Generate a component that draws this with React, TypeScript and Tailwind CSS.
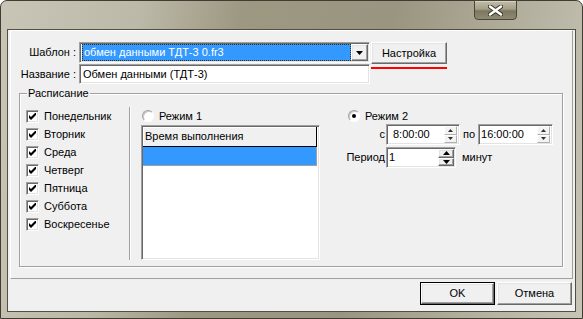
import React from 'react';

const sunken =
  'border border-t-[#a0a0a0] border-l-[#a0a0a0] border-b-white border-r-white shadow-[inset_1px_1px_0_#696969,inset_-1px_-1px_0_#e3e3e3]';
const raised =
  'border border-t-white border-l-white border-b-[#696969] border-r-[#696969] shadow-[inset_-1px_-1px_0_#a0a0a0,inset_1px_1px_0_#e3e3e3] bg-[#f0f0f0]';

const days = ['Понедельник', 'Вторник', 'Среда', 'Четверг', 'Пятница', 'Суббота', 'Воскресенье'];

const CheckBox = ({ label }: { label: string }) => (
  <div className="flex items-center h-[13px]">
    <span className={`w-[13px] h-[13px] bg-white flex items-center justify-center ${sunken}`}>
      <svg width="7" height="7" viewBox="0 0 7 7">
        <path d="M0 2 L2 4 L7 -1 L7 2 L2 7 L0 5 Z" fill="#000" />
      </svg>
    </span>
    <span className="ml-[5px]">{label}</span>
  </div>
);

const Radio = ({ label, checked }: { label: string; checked?: boolean }) => (
  <div className="flex items-center h-[12px]">
    <span className="w-[12px] h-[12px] rounded-full bg-white border border-t-[#a0a0a0] border-l-[#a0a0a0] border-b-white border-r-white shadow-[inset_1px_1px_0_#c8c8c8] flex items-center justify-center">
      {checked && <span className="w-[4px] h-[4px] rounded-full bg-black" />}
    </span>
    <span className="ml-[5px]">{label}</span>
  </div>
);

const Arrow = ({ up, big }: { up?: boolean; big?: boolean }) =>
  big ? (
    <svg width="7" height="4" viewBox="0 0 7 4">
      <path d={up ? 'M3.5 0 L7 4 L0 4 Z' : 'M0 0 L7 0 L3.5 4 Z'} fill="#000" />
    </svg>
  ) : (
    <svg width="5" height="3" viewBox="0 0 5 3">
      <path d={up ? 'M2.5 0 L5 3 L0 3 Z' : 'M0 0 L5 0 L2.5 3 Z'} fill="#303030" />
    </svg>
  );

// поле времени с маленьким спином
const TimeEdit = ({ value, width, pad }: { value: string; width: string; pad: string }) => (
  <div className={`flex h-[21px] bg-white ${sunken} ${width}`}>
    <span className={`flex-1 leading-[19px] ${pad}`}>{value}</span>
    <div className="flex flex-col w-[13px] my-[1px] mr-[2px]">
      <div className="flex-1 bg-[#f3f3f3] border border-t-white border-l-white border-b-[#b0b0b0] border-r-[#b0b0b0] flex items-center justify-center">
        <Arrow up />
      </div>
      <div className="flex-1 bg-[#f3f3f3] border border-t-white border-l-white border-b-[#b0b0b0] border-r-[#b0b0b0] flex items-center justify-center">
        <Arrow />
      </div>
    </div>
  </div>
);

const CloseGlyph = () => (
  <svg width="15" height="11" viewBox="0 0 15 11">
    <path d="M2 1.5 L13 9.5 M13 1.5 L2 9.5" stroke="#3b3829" strokeWidth="4.5" strokeLinecap="round" />
    <path d="M2 1.5 L13 9.5 M13 1.5 L2 9.5" stroke="#ffffff" strokeWidth="2.5" strokeLinecap="round" />
  </svg>
);

export default function App() {
  return (
    <div className="w-[583px] h-[319px] font-['Liberation_Sans',Arial,sans-serif] text-[11px] leading-[13px] text-black bg-white">
      <div className="w-full h-full flex flex-col rounded-t-[7px] border border-[#3f3c31] bg-[linear-gradient(100deg,#c8c5b7_0%,#bdb9a8_22%,#9c9882_38%,#9a9580_62%,#b8b4a3_86%,#c8c5b7_100%)]">
        {/* Заголовок окна */}
        <div className="h-[28px] flex justify-end pr-[65px] shrink-0">
          <div className="-mt-px w-[43px] h-[20px] rounded-b-[4px] border border-[#4a4738] bg-[linear-gradient(180deg,#c2bda9_0%,#a49f88_45%,#7d775f_55%,#8f8a72_100%)] shadow-[inset_0_1px_0_#d8d4c4] flex items-center justify-center">
            <CloseGlyph />
          </div>
        </div>

        {/* Клиентская область */}
        <div className="mx-[6px] mb-[6px] h-[283px] border border-[#514e42] bg-[#f0f0f0] flex flex-col">
          {/* Панель */}
          <div className="ml-[2px] mr-[2px] h-[249px] border border-t-white border-l-white border-b-[#a0a0a0] border-r-[#a0a0a0] flex flex-col">
            <div className="flex items-start mt-[11px]">
              <span className="w-[66px] text-right pr-[1px] mt-[4px]">Шаблон :</span>
              <div className={`ml-[2px] w-[291px] h-[21px] bg-white flex items-center pl-[2px] pr-[1px] ${sunken}`}>
                <div className="flex-1 h-[17px] bg-[#3399ff] border border-dotted border-[#3a2a10] text-white leading-[15px] pl-[1px]">
                  обмен данными ТДТ-3 0.fr3
                </div>
                <div className={`w-[17px] h-[17px] flex items-center justify-center ${raised}`}>
                  <Arrow big />
                </div>
              </div>
              <div className="relative ml-[1px]">
                <div className={`w-[76px] h-[22px] flex items-center justify-center ${raised}`}>Настройка</div>
                <div className="absolute left-0 top-[25px] w-[76px] h-[2px] bg-[#ff0000]" />
              </div>
            </div>

            <div className="flex items-center">
              <span className="w-[66px] text-right pr-[1px]">Название :</span>
              <div className={`ml-[2px] w-[291px] h-[20px] bg-white pl-[3px] leading-[18px] ${sunken}`}>
                Обмен данными (ТДТ-3)
              </div>
            </div>

            {/* Расписание */}
            <div className="relative ml-[8px] mt-[9px] w-[544px] h-[174px] border border-[#a0a0a0] shadow-[inset_1px_1px_0_#ffffff,1px_1px_0_#ffffff] flex">
              <span className="absolute left-[7px] -top-[7px] px-[1px] bg-[#f0f0f0]">Расписание</span>

              <div className="w-[109px] pl-[6px] pt-[16px] flex flex-col gap-[5px]">
                {days.map((d) => (
                  <CheckBox key={d} label={d} />
                ))}
              </div>

              <div className="mt-[13px] w-[2px] h-[153px] border-l border-l-[#a0a0a0] border-r border-r-white" />

              <div className="pl-[10px] pt-[16px] flex flex-col">
                <div className="ml-[1px]">
                  <Radio label="Режим 1" />
                </div>
                <div className="mt-[3px] w-[179px] h-[135px] bg-white border border-t-[#a0a0a0] border-l-[#a0a0a0] border-b-white border-r-white shadow-[inset_1px_1px_0_#696969,inset_-1px_-1px_0_#e3e3e3] p-[1px] pl-[1px] pt-[1px]">
                  <div className="w-[174px] h-[20px] bg-[#f0f0f0] border-r border-b border-black shadow-[inset_1px_1px_0_#ffffff] pl-[2px] leading-[19px]">
                    Время выполнения
                  </div>
                  <div className="w-[174px] h-[19px] bg-[#3399ff] border-r border-b border-[#a0a0a0]" />
                </div>
              </div>

              <div className="ml-[26px] pt-[16px] flex flex-col">
                <div className="ml-[2px]">
                  <Radio label="Режим 2" checked />
                </div>
                <div className="mt-[2px] flex items-center">
                  <span className="w-[40px] text-right pr-[1px]">с</span>
                  <TimeEdit value="8:00:00" width="w-[74px]" pad="pl-[6px]" />
                  <span className="px-[3px]">по</span>
                  <TimeEdit value="16:00:00" width="w-[75px]" pad="pl-[2px]" />
                </div>
                <div className="mt-[2px] flex items-center">
                  <span className="w-[40px] text-right pr-[1px]">Период</span>
                  <div className={`flex w-[70px] h-[21px] bg-white ${sunken}`}>
                    <span className="flex-1 pl-[2px] leading-[19px]">1</span>
                    <div className="flex flex-col w-[16px] my-[1px] mr-[1px]">
                      <div className={`flex-1 flex items-center justify-center ${raised}`}>
                        <Arrow up big />
                      </div>
                      <div className={`flex-1 flex items-center justify-center ${raised}`}>
                        <Arrow big />
                      </div>
                    </div>
                  </div>
                  <span className="ml-[6px]">минут</span>
                </div>
              </div>
            </div>
          </div>

          {/* Кнопки */}
          <div className="mt-[3px] mr-[3px] flex justify-end gap-[2px]">
            <div className="w-[75px] h-[23px] border border-black">
              <div className={`w-full h-full flex items-center justify-center ${raised}`}>OK</div>
            </div>
            <div className={`w-[75px] h-[23px] flex items-center justify-center ${raised}`}>Отмена</div>
          </div>
        </div>
      </div>
    </div>
  );
}
